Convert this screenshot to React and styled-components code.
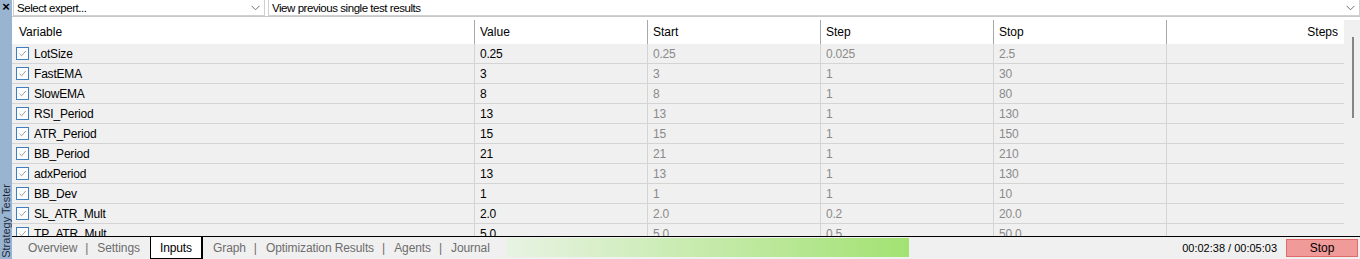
import React from "react";
import styled, { createGlobalStyle } from "styled-components";

const GlobalStyle = createGlobalStyle`
  html, body {
    margin: 0;
    padding: 0;
    background: #f0f0f0;
    font-family: "Liberation Sans", Arial, sans-serif;
    font-size: 12px;
  }
`;

const rows = [
  ["LotSize", "0.25", "0.25", "0.025", "2.5"],
  ["FastEMA", "3", "3", "1", "30"],
  ["SlowEMA", "8", "8", "1", "80"],
  ["RSI_Period", "13", "13", "1", "130"],
  ["ATR_Period", "15", "15", "1", "150"],
  ["BB_Period", "21", "21", "1", "210"],
  ["adxPeriod", "13", "13", "1", "130"],
  ["BB_Dev", "1", "1", "1", "10"],
  ["SL_ATR_Mult", "2.0", "2.0", "0.2", "20.0"],
  ["TP_ATR_Mult", "5.0", "5.0", "0.5", "50.0"],
];

const tabs = [
  "Overview",
  "Settings",
  "Inputs",
  "Graph",
  "Optimization Results",
  "Agents",
  "Journal",
];

const Window = styled.div`
  display: flex;
  width: 1360px;
  height: 259px;
  overflow: hidden;
  background: #f0f0f0;
`;

const SideBar = styled.div`
  width: 12px;
  flex: none;
  background: #99b4d1;
  display: flex;
  flex-direction: column;
  align-items: center;
  justify-content: space-between;
`;

const CloseMark = styled.span`
  font-size: 13px;
  font-weight: bold;
  line-height: 14px;
  color: #000;
`;

const SideTitle = styled.span`
  writing-mode: vertical-rl;
  transform: rotate(180deg);
  font-size: 11px;
  color: #1e2a3a;
  line-height: 12px;
  white-space: nowrap;
  margin-bottom: 1px;
`;

const Main = styled.div`
  flex: 1;
  display: flex;
  flex-direction: column;
  min-width: 0;
`;

const TopBar = styled.div`
  height: 16px;
  flex: none;
  display: flex;
  gap: 3px;
  padding-left: 1px;
  background: #fff;
  border-bottom: 1px solid #c8c8c8;
  font-size: 11.5px;
  letter-spacing: -0.45px;
`;

const Combo = styled.div`
  width: ${(p) => (p.$wide ? "auto" : "252px")};
  flex: ${(p) => (p.$wide ? 1 : "none")};
  display: flex;
  align-items: center;
  justify-content: space-between;
  box-sizing: border-box;
  border: 1px solid #d0d0d0;
  border-top: none;
  padding: 0 4px 0 3px;
  color: #000;
  background: #fff;
`;

const Chevron = () => (
  <svg width="9" height="6" viewBox="0 0 9 6">
    <path d="M0.5 0.8 L4.5 4.8 L8.5 0.8" fill="none" stroke="#707070" strokeWidth="1" />
  </svg>
);

const Panel = styled.div`
  flex: 1;
  min-height: 0;
  overflow: hidden;
  display: flex;
  background: #fff;
  padding-top: 3px;
`;

const Table = styled.div`
  width: 1332px;
  flex: none;
  display: flex;
  flex-direction: column;
`;

const cols = "462px 173px 173px 173px 173px 1fr";

const HeaderRow = styled.div`
  display: grid;
  grid-template-columns: ${cols};
  height: 24px;
  flex: none;
  background: #fff;
`;

const HeaderCell = styled.div`
  display: flex;
  align-items: center;
  justify-content: ${(p) => (p.$right ? "flex-end" : "flex-start")};
  padding: 0 6px 0 ${(p) => (p.$first ? "7px" : "5px")};
  border-left: ${(p) => (p.$first ? "none" : "1px solid #a8a8a8")};
  color: #000;
`;

const Row = styled.div`
  display: grid;
  grid-template-columns: ${cols};
  height: 19px;
  flex: none;
  background: #f0f0f0;
  border-bottom: 1px solid #d4d4d4;
`;

const Cell = styled.div`
  display: flex;
  align-items: center;
  gap: 5px;
  padding-left: ${(p) => (p.$first ? "4px" : "5px")};
  border-left: ${(p) => (p.$first ? "none" : "1px solid #d4d4d4")};
  color: ${(p) => (p.$muted ? "#8a8a8a" : "#000")};
  letter-spacing: -0.2px;
  white-space: nowrap;
`;

const CheckBox = styled.span`
  width: 11px;
  height: 11px;
  flex: none;
  border: 1px solid #3f7fbf;
  background: #fdfdfd;
  display: flex;
  align-items: center;
  justify-content: center;
`;

const Tick = () => (
  <svg width="9" height="9" viewBox="0 0 9 9">
    <path d="M1.5 4.8 L3.6 6.8 L7.8 2" fill="none" stroke="#a0a0a0" strokeWidth="1" />
  </svg>
);

const ScrollTrack = styled.div`
  flex: 1;
  background: #f0f0f0;
  padding: 17px 0 0 8px;
`;

const ScrollThumb = styled.div`
  width: 2px;
  height: 81px;
  background: #858585;
`;

const BottomBar = styled.div`
  height: 22px;
  flex: none;
  border-top: 1px solid #000;
  display: flex;
  align-items: stretch;
  background: #f0f0f0;
`;

const Tabs = styled.div`
  display: flex;
  align-items: stretch;
  padding-left: 10px;
  width: 484px;
  flex: none;
`;

const Tab = styled.div`
  display: flex;
  align-items: center;
  padding: 0 ${(p) => (p.$active ? "9px" : "6px")};
  margin: 0 ${(p) => (p.$active ? "4px 0 4px" : "0 1px 0")};
  color: ${(p) => (p.$active ? "#000" : "#6d6d6d")};
  background: ${(p) => (p.$active ? "#fff" : "transparent")};
  border: ${(p) => (p.$active ? "1px solid #000" : "none")};
  border-top: none;
  border-right-width: ${(p) => (p.$active ? "2px" : "0")};
  letter-spacing: -0.1px;
  white-space: nowrap;
`;

const Separator = styled.span`
  display: flex;
  align-items: center;
  color: #6d6d6d;
  padding: 0 3px 1px 2px;
`;

const Progress = styled.div`
  width: 403px;
  height: 19px;
  margin-top: 1px;
  flex: none;
  background: linear-gradient(to right, #e8f3e3, #a2e272);
`;

const Timer = styled.div`
  margin-left: auto;
  display: flex;
  align-items: center;
  padding-right: 9px;
  font-size: 11px;
  color: #000;
`;

const StopButton = styled.div`
  width: 72px;
  height: 18px;
  margin: 2px 2px 0 0;
  box-sizing: border-box;
  border: 1px solid #e06a6a;
  background: #f09a9a;
  display: flex;
  align-items: center;
  justify-content: center;
  color: #000;
`;

export default function App() {
  return (
    <>
      <GlobalStyle />
      <Window>
        <SideBar>
          <CloseMark>×</CloseMark>
          <SideTitle>Strategy Tester</SideTitle>
        </SideBar>
        <Main>
          <TopBar>
            <Combo>
              <span>Select expert...</span>
              <Chevron />
            </Combo>
            <Combo $wide>
              <span>View previous single test results</span>
              <Chevron />
            </Combo>
          </TopBar>
          <Panel>
            <Table>
              <HeaderRow>
                <HeaderCell $first>Variable</HeaderCell>
                <HeaderCell>Value</HeaderCell>
                <HeaderCell>Start</HeaderCell>
                <HeaderCell>Step</HeaderCell>
                <HeaderCell>Stop</HeaderCell>
                <HeaderCell $right>Steps</HeaderCell>
              </HeaderRow>
              {rows.map(([name, value, start, step, stop]) => (
                <Row key={name}>
                  <Cell $first>
                    <CheckBox>
                      <Tick />
                    </CheckBox>
                    {name}
                  </Cell>
                  <Cell>{value}</Cell>
                  <Cell $muted>{start}</Cell>
                  <Cell $muted>{step}</Cell>
                  <Cell $muted>{stop}</Cell>
                  <Cell />
                </Row>
              ))}
            </Table>
            <ScrollTrack>
              <ScrollThumb />
            </ScrollTrack>
          </Panel>
          <BottomBar>
            <Tabs>
              {tabs.map((t, i) => {
                const active = t === "Inputs";
                const nextActive = tabs[i + 1] === "Inputs";
                const last = i === tabs.length - 1;
                return (
                  <React.Fragment key={t}>
                    <Tab $active={active}>{t}</Tab>
                    {!last && !active && !nextActive && <Separator>|</Separator>}
                  </React.Fragment>
                );
              })}
            </Tabs>
            <Progress />
            <Timer>00:02:38 / 00:05:03</Timer>
            <StopButton>Stop</StopButton>
          </BottomBar>
        </Main>
      </Window>
    </>
  );
}
